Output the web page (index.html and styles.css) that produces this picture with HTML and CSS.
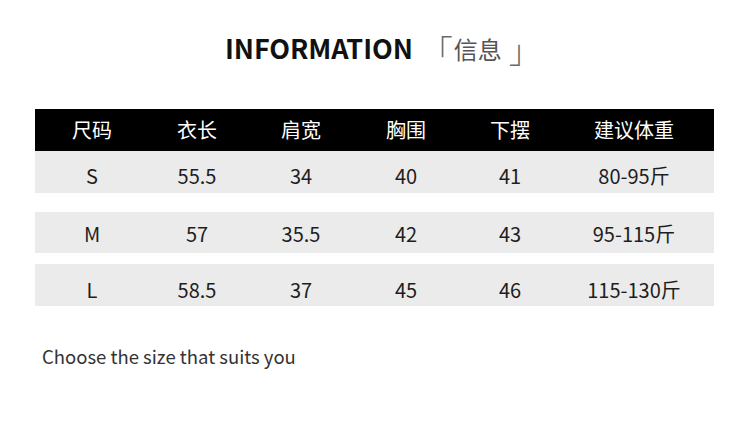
FILE: index.html
```html
<!DOCTYPE html>
<html lang="zh">
<head>
<meta charset="utf-8">
<title>INFORMATION</title>
<link rel="stylesheet" href="styles.css">
</head>
<body>
<div class="page">
  <h1 class="title"><span class="title-en">INFORMATION</span><span class="title-cn"><span class="br br-open">「</span><span class="cn-text">信息</span><span class="br br-close">」</span></span></h1>
  <div class="table">
    <div class="row head">
      <div>尺码</div><div>衣长</div><div>肩宽</div><div>胸围</div><div>下摆</div><div>建议体重</div>
    </div>
    <div class="row data row-s">
      <div>S</div><div>55.5</div><div>34</div><div>40</div><div>41</div><div>80-95斤</div>
    </div>
    <div class="row data row-m">
      <div>M</div><div>57</div><div>35.5</div><div>42</div><div>43</div><div>95-115斤</div>
    </div>
    <div class="row data row-l">
      <div>L</div><div>58.5</div><div>37</div><div>45</div><div>46</div><div>115-130斤</div>
    </div>
  </div>
  <p class="note">Choose the size that suits you</p>
</div>
</body>
</html>
```

FILE: styles.css
```css
html, body {
  margin: 0;
  padding: 0;
  background: #ffffff;
}
.page {
  width: 750px;
  height: 426px;
  font-family: "Noto Sans CJK SC", "Noto Sans", sans-serif;
  color: #222;
}
.title {
  margin: 0;
  padding: 34px 0 0 225px;
  display: flex;
  align-items: baseline;
  line-height: 28px;
  height: 28px;
  font-weight: 700;
}
.title-en {
  font-size: 27px;
  color: #111;
  letter-spacing: -0.1px;
  margin-right: 8px;
}
.title-cn {
  display: flex;
  align-items: baseline;
  font-weight: 400;
  color: #555;
}
.br {
  font-size: 32px;
  line-height: 20px;
  font-weight: 300;
  color: #6a6a6a;
  position: relative;
  top: 4px;
}
.cn-text {
  font-size: 24px;
  line-height: 20px;
  margin: 0 7px 0 1px;
}
.table {
  margin: 47px 0 0 35px;
  width: 679px;
}
.row {
  display: grid;
  grid-template-columns: 114px 96px 112px 98px 110px 1fr;
  padding-right: 11px;
  height: 42px;
  box-sizing: border-box;
  font-size: 20px;
  line-height: 42px;
  text-align: center;
}
.head {
  background: #000;
  color: #fff;
}
.data {
  background: #ebebeb;
  color: #1e1e1e;
}
.row-s {
  padding-top: 4px;
}
.row-m {
  margin-top: 19px;
  height: 41px;
  padding-top: 1px;
}
.row-l {
  margin-top: 11px;
  padding-top: 5px;
}
.note {
  margin: 41px 0 0 42px;
  font-size: 18.5px;
  line-height: 18px;
  color: #333;
}
```
